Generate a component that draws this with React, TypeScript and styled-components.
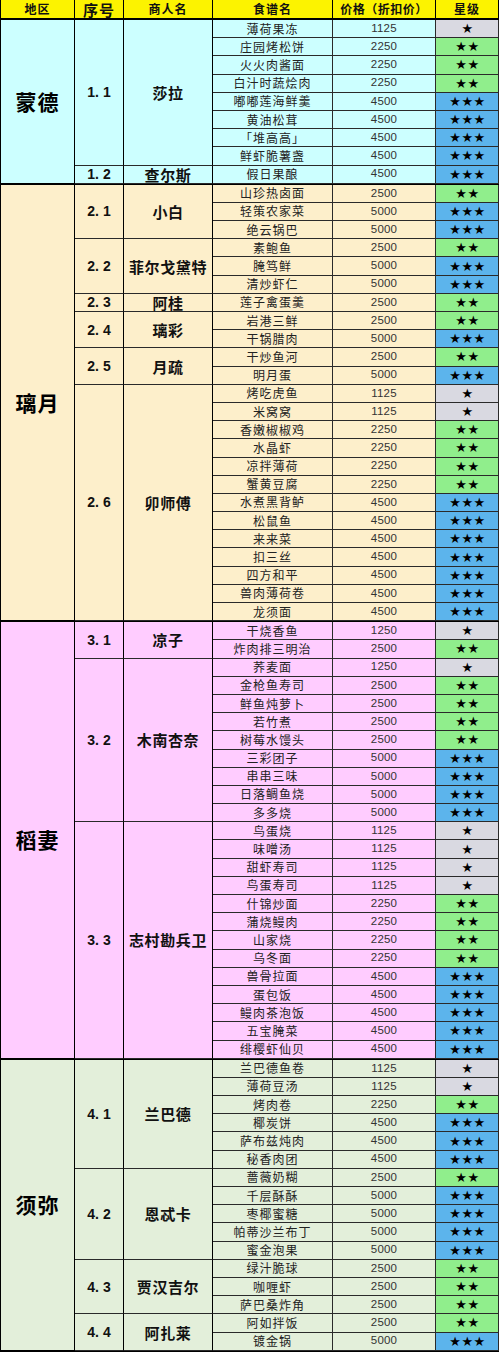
import React from "react";
import styled, { createGlobalStyle } from "styled-components";

type Dish = [string, number, number];
type Merchant = { seq: string; name: string; dishes: Dish[] };
type Region = { name: string; bg: string; merchants: Merchant[] };

const data: Region[] = [
  {
    name: "蒙德",
    bg: "#CCFFFF",
    merchants: [
      {
        seq: "1. 1",
        name: "莎拉",
        dishes: [
          ["薄荷果冻", 1125, 1],
          ["庄园烤松饼", 2250, 2],
          ["火火肉酱面", 2250, 2],
          ["白汁时蔬烩肉", 2250, 2],
          ["嘟嘟莲海鲜羹", 4500, 3],
          ["黄油松茸", 4500, 3],
          ["「堆高高」", 4500, 3],
          ["鲜虾脆薯盏", 4500, 3],
        ],
      },
      { seq: "1. 2", name: "查尔斯", dishes: [["假日果酿", 4500, 3]] },
    ],
  },
  {
    name: "璃月",
    bg: "#FDEFCB",
    merchants: [
      {
        seq: "2. 1",
        name: "小白",
        dishes: [
          ["山珍热卤面", 2500, 2],
          ["轻策农家菜", 5000, 3],
          ["绝云锅巴", 5000, 3],
        ],
      },
      {
        seq: "2. 2",
        name: "菲尔戈黛特",
        dishes: [
          ["素鲍鱼", 2500, 2],
          ["腌笃鲜", 5000, 3],
          ["清炒虾仁", 5000, 3],
        ],
      },
      { seq: "2. 3", name: "阿桂", dishes: [["莲子禽蛋羹", 2500, 2]] },
      {
        seq: "2. 4",
        name: "璃彩",
        dishes: [
          ["岩港三鲜", 2500, 2],
          ["干锅腊肉", 5000, 3],
        ],
      },
      {
        seq: "2. 5",
        name: "月疏",
        dishes: [
          ["干炒鱼河", 2500, 2],
          ["明月蛋", 5000, 3],
        ],
      },
      {
        seq: "2. 6",
        name: "卯师傅",
        dishes: [
          ["烤吃虎鱼", 1125, 1],
          ["米窝窝", 1125, 1],
          ["香嫩椒椒鸡", 2250, 2],
          ["水晶虾", 2250, 2],
          ["凉拌薄荷", 2250, 2],
          ["蟹黄豆腐", 2250, 2],
          ["水煮黑背鲈", 4500, 3],
          ["松鼠鱼", 4500, 3],
          ["来来菜", 4500, 3],
          ["扣三丝", 4500, 3],
          ["四方和平", 4500, 3],
          ["兽肉薄荷卷", 4500, 3],
          ["龙须面", 4500, 3],
        ],
      },
    ],
  },
  {
    name: "稻妻",
    bg: "#FFCCFF",
    merchants: [
      {
        seq: "3. 1",
        name: "凉子",
        dishes: [
          ["干烧香鱼", 1250, 1],
          ["炸肉排三明治", 2500, 2],
        ],
      },
      {
        seq: "3. 2",
        name: "木南杏奈",
        dishes: [
          ["荞麦面", 1250, 1],
          ["金枪鱼寿司", 2500, 2],
          ["鲜鱼炖萝卜", 2500, 2],
          ["若竹煮", 2500, 2],
          ["树莓水馒头", 2500, 2],
          ["三彩团子", 5000, 3],
          ["串串三味", 5000, 3],
          ["日落鲷鱼烧", 5000, 3],
          ["多多烧", 5000, 3],
        ],
      },
      {
        seq: "3. 3",
        name: "志村勘兵卫",
        dishes: [
          ["鸟蛋烧", 1125, 1],
          ["味噌汤", 1125, 1],
          ["甜虾寿司", 1125, 1],
          ["鸟蛋寿司", 1125, 1],
          ["什锦炒面", 2250, 2],
          ["蒲烧鳗肉", 2250, 2],
          ["山家烧", 2250, 2],
          ["乌冬面", 2250, 2],
          ["兽骨拉面", 4500, 3],
          ["蛋包饭", 4500, 3],
          ["鳗肉茶泡饭", 4500, 3],
          ["五宝腌菜", 4500, 3],
          ["绯樱虾仙贝", 4500, 3],
        ],
      },
    ],
  },
  {
    name: "须弥",
    bg: "#E3EFDA",
    merchants: [
      {
        seq: "4. 1",
        name: "兰巴德",
        dishes: [
          ["兰巴德鱼卷", 1125, 1],
          ["薄荷豆汤", 1125, 1],
          ["烤肉卷", 2250, 2],
          ["椰炭饼", 4500, 3],
          ["萨布兹炖肉", 4500, 3],
          ["秘香肉团", 4500, 3],
        ],
      },
      {
        seq: "4. 2",
        name: "恩忒卡",
        dishes: [
          ["蔷薇奶糊", 2500, 2],
          ["千层酥酥", 5000, 3],
          ["枣椰蜜糖", 5000, 3],
          ["帕蒂沙兰布丁", 5000, 3],
          ["蜜金泡果", 5000, 3],
        ],
      },
      {
        seq: "4. 3",
        name: "贾汉吉尔",
        dishes: [
          ["绿汁脆球", 2500, 2],
          ["咖喱虾", 2500, 2],
          ["萨巴桑炸角", 2500, 2],
        ],
      },
      {
        seq: "4. 4",
        name: "阿扎莱",
        dishes: [
          ["阿如拌饭", 2500, 2],
          ["镀金锅", 5000, 3],
        ],
      },
    ],
  },
];

const starBg: Record<number, string> = {
  1: "#D9D9E1",
  2: "#90EE8C",
  3: "#5CB4EC",
};

const GlobalStyle = createGlobalStyle`
  html, body { margin: 0; padding: 0; background: #ffffff; }
  body {
    font-family: "Liberation Sans", "Noto Sans CJK SC", sans-serif;
    color: #111;
  }
  * { box-sizing: border-box; }
`;

const ROW_H = "18.19px";
const LINE = "#2a2a2a";

const Table = styled.div`
  width: 499px;
  display: flex;
  flex-direction: column;
`;

const HeaderRow = styled.div`
  display: flex;
  height: 20px;
  background: #fcf300;
  border-bottom: 2px solid #000;
`;

const HeaderCell = styled.div<{ $w: number; $size?: number; $first?: boolean; $ls?: number }>`
  flex: none;
  width: ${(p) => p.$w}px;
  display: flex;
  align-items: center;
  justify-content: center;
  border-right: 1px solid #000;
  border-left: ${(p) => (p.$first ? "1px solid #000" : "none")};
  font-family: "Noto Sans CJK SC", sans-serif;
  font-weight: 700;
  font-size: ${(p) => p.$size ?? 12}px;
  letter-spacing: ${(p) => p.$ls ?? 1}px;
  line-height: 1;
  color: #111;
`;

const Section = styled.div<{ $bg: string }>`
  display: flex;
  background: ${(p) => p.$bg};
  border-bottom: 1px solid #000;
`;

const RegionCell = styled.div`
  flex: none;
  width: 75px;
  display: flex;
  align-items: center;
  justify-content: center;
  border-left: 1px solid #000;
  border-right: 1px solid #000;
  border-bottom: 1px solid #000;
  font-family: "Noto Sans CJK SC", sans-serif;
  font-weight: 700;
  font-size: 21px;
  line-height: 1;
  letter-spacing: 1px;
  color: #000;
`;

const MerchantList = styled.div`
  flex: 1;
  display: flex;
  flex-direction: column;
`;

const MerchantRow = styled.div`
  display: flex;
`;

const SeqCell = styled.div`
  flex: none;
  width: 49px;
  display: flex;
  align-items: center;
  justify-content: center;
  border-right: 1px solid #000;
  border-bottom: 1px solid ${LINE};
  font-family: "Liberation Sans", sans-serif;
  font-weight: 700;
  font-size: 14px;
  line-height: 1;
  white-space: pre;
  color: #111;
`;

const NameCell = styled.div`
  flex: none;
  width: 89px;
  display: flex;
  align-items: center;
  justify-content: center;
  border-right: 1px solid #000;
  border-bottom: 1px solid ${LINE};
  font-family: "Noto Sans CJK SC", sans-serif;
  font-weight: 700;
  font-size: 15px;
  line-height: 1;
  letter-spacing: 0.6px;
  color: #111;
`;

const DishList = styled.div`
  flex: 1;
  display: flex;
  flex-direction: column;
`;

const DishRow = styled.div`
  display: flex;
  height: ${ROW_H};
`;

const DishName = styled.div`
  flex: none;
  width: 120px;
  display: flex;
  align-items: center;
  justify-content: center;
  border-right: 1px solid ${LINE};
  border-bottom: 1px solid ${LINE};
  font-family: "Noto Sans CJK SC", sans-serif;
  font-size: 12px;
  line-height: 1;
  letter-spacing: 1px;
  color: #222;
  white-space: nowrap;
`;

const Price = styled.div`
  flex: none;
  width: 103px;
  display: flex;
  align-items: center;
  justify-content: center;
  border-right: 1px solid ${LINE};
  border-bottom: 1px solid ${LINE};
  font-family: "Liberation Sans", sans-serif;
  font-size: 11.5px;
  line-height: 1;
  letter-spacing: 0.2px;
  color: #333;
`;

const Stars = styled.div<{ $bg: string }>`
  flex: none;
  width: 63px;
  display: flex;
  align-items: center;
  justify-content: center;
  background: ${(p) => p.$bg};
  border-right: 1px solid ${LINE};
  border-bottom: 1px solid ${LINE};
  font-family: "DejaVu Sans", sans-serif;
  font-size: 13px;
  line-height: 1;
  letter-spacing: 0.5px;
  color: #000;
  padding-left: 1px;
`;

export default function App() {
  return (
    <>
      <GlobalStyle />
      <Table>
        <HeaderRow>
          <HeaderCell $w={75} $first>地区</HeaderCell>
          <HeaderCell $w={49} $size={15}>序号</HeaderCell>
          <HeaderCell $w={89}>商人名</HeaderCell>
          <HeaderCell $w={120}>食谱名</HeaderCell>
          <HeaderCell $w={103} $ls={0.5}>价格（折扣价）</HeaderCell>
          <HeaderCell $w={63}>星级</HeaderCell>
        </HeaderRow>
        {data.map((r) => (
          <Section key={r.name} $bg={r.bg}>
            <RegionCell>{r.name}</RegionCell>
            <MerchantList>
              {r.merchants.map((m) => (
                <MerchantRow key={m.seq}>
                  <SeqCell>{m.seq}</SeqCell>
                  <NameCell>{m.name}</NameCell>
                  <DishList>
                    {m.dishes.map(([n, p, s]) => (
                      <DishRow key={n}>
                        <DishName>{n}</DishName>
                        <Price>{p}</Price>
                        <Stars $bg={starBg[s]}>{"★".repeat(s)}</Stars>
                      </DishRow>
                    ))}
                  </DishList>
                </MerchantRow>
              ))}
            </MerchantList>
          </Section>
        ))}
      </Table>
    </>
  );
}
